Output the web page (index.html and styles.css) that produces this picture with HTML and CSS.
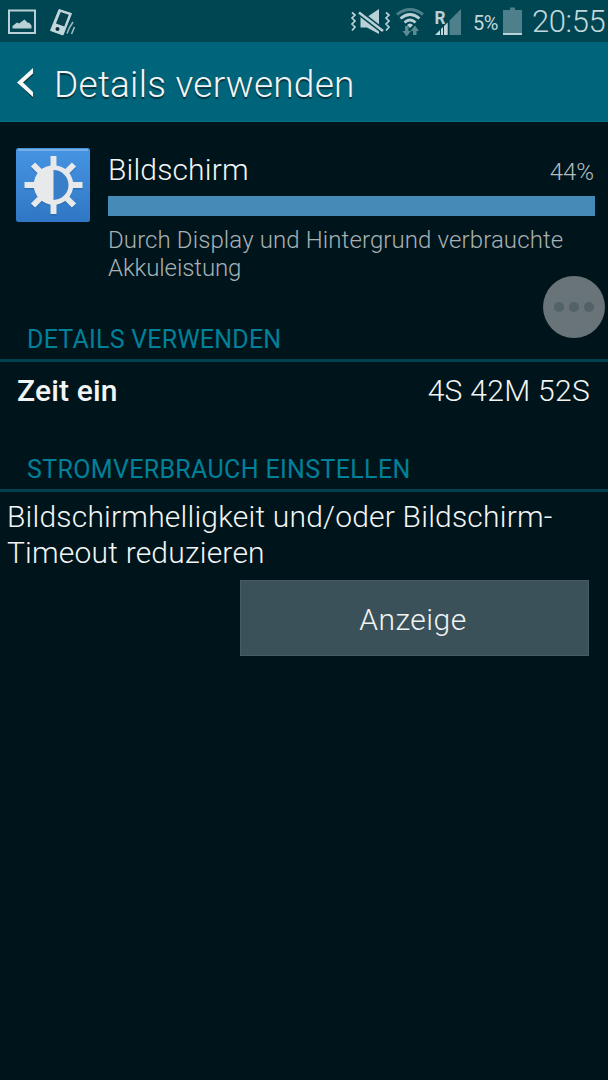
FILE: index.html
```html
<!DOCTYPE html>
<html lang="de">
<head>
<meta charset="utf-8">
<title>Details verwenden</title>
<link rel="stylesheet" href="styles.css">
</head>
<body>
<header class="status">
  <svg class="status-left" width="100" height="42" viewBox="0 0 100 42">
    <path d="M9 10.500H35V33H9Z" fill="none" stroke="#b9d0d6" stroke-width="2"/>
    <path d="M12.500 28.500V26L17 22.500L19 23.500L24.500 19.500L28 23L29 22.500L31.500 25.500V28.500Z" fill="#b9d0d6"/>
    <path d="M59 9.500L71.500 13.500L63 35L50.500 30.500Z" fill="#c2d7dc" stroke="#c2d7dc" stroke-width="1" stroke-linejoin="round"/>
    <path d="M60.600 12L68.800 14.700L64.300 26.500L56 23.500Z" fill="#0a4350"/>
    <circle cx="57.500" cy="29" r="2" fill="#082d36"/>
    <path d="M67 33.500L69.500 27.500L73 22M71.500 34L74.500 27" fill="none" stroke="#9bb9bf" stroke-width="1.600"/>
  </svg>
  <svg class="status-right" width="130" height="42" viewBox="340 0 130 42">
    <path d="M352 12.500L355 15L352 18L355 21L352 24L355 27L352 30.500M386 12.500L389 15L386 18L389 21L386 24L389 27L386 30.500" fill="none" stroke="#b9d0d6" stroke-width="1.700"/>
    <path d="M360.500 17H367L379 9V34L367 27.500H360.500Z" fill="#b9d0d6"/>
    <path d="M359 12.500L383 31" stroke="#004652" stroke-width="5.500"/>
    <path d="M359 12.500L383 31" stroke="#b9d0d6" stroke-width="2.600"/>
    <path d="M397 14.500Q410 4.500 423 14.500" fill="none" stroke="#4d808a" stroke-width="3"/>
    <path d="M400.500 18.500Q410 10.500 419.500 18.500M404.500 22.500Q410 17.500 415.500 22.500" fill="none" stroke="#b9d0d6" stroke-width="2.800"/>
    <path d="M407 25Q410 22 413 25L410 28Z" fill="#b9d0d6"/>
    <path d="M405 26H408.500V31H411L406.700 36.500L402.500 31H405ZM413 35V31H410.500L415 25.500L419 31H416.500V35Z" fill="#5c8b94"/>
    <path d="M461 9V35H449.500V20.500Z" fill="#4d808a"/>
    <path d="M435 35L440 30V35ZM441 35V29L443 27V35ZM444 35V26L447.700 22.500V35Z" fill="#c2d7dc"/>
    <text class="roaming" x="434.500" y="23.500" textLength="11" lengthAdjust="spacingAndGlyphs">R</text>
  </svg>
  <span class="charge">5%</span>
  <svg class="battery" width="20" height="42" viewBox="0 0 20 42">
    <path d="M0 10H7V7.500H12V10H19V34H0Z" fill="#4d808a"/>
    <path d="M0 33H19V35H0Z" fill="#b9d0d6"/>
  </svg>
  <time class="clock">20:55</time>
</header>
<nav class="titlebar">
  <svg class="back" width="20" height="36" viewBox="0 0 20 36">
    <path d="M18 4.500L3 18.500L18 33.500V27.500L8.500 18.500L18 10Z" fill="#082d36"/>
    <path d="M18 3L2 17.500L18 32V27L8 17.500L18 8.500Z" fill="#f5f7f7"/>
  </svg>
  <h1 class="title">Details verwenden</h1>
</nav>
<main>
  <section class="summary">
    <svg class="app-icon" width="74" height="74" viewBox="0 0 74 74">
      <defs><linearGradient id="blue" x2="0" y2="1"><stop stop-color="#4594e2"/><stop offset=".45" stop-color="#3d88d6"/><stop offset="1" stop-color="#2f76c4"/></linearGradient></defs>
      <rect width="74" height="74" rx="2.500" fill="url(#blue)"/>
      <path d="M2 2H72" stroke="#79aee5" stroke-width="2"/>
      <g class="sun-shadow" transform="translate(0 1.500)">
        <path d="M37.500 8V20M37.500 54V66M8.500 37H20M55 37H66.500M17 16.500L25 24.500M50 49.500L58 57.500M58 16.500L50 24.500M25 49.500L17 57.500"/>
        <circle cx="37.500" cy="37" r="16.500"/>
      </g>
      <path class="rays" d="M37.500 8V20M37.500 54V66M8.500 37H20M55 37H66.500M17 16.500L25 24.500M50 49.500L58 57.500M58 16.500L50 24.500M25 49.500L17 57.500"/>
      <circle cx="37.500" cy="37" r="19.800" fill="#e8e9ea"/>
      <path d="M37.500 22A15 15 0 0 1 37.500 52Z" fill="#397fc8"/>
    </svg>
    <div class="usage">
      <div class="usage-head"><span class="name">Bildschirm</span><span class="percent">44%</span></div>
      <div class="bar"></div>
      <p class="description"><span class="desc-one">Durch Display und Hintergrund verbrauchte</span><br><span class="desc-two">Akkuleistung</span></p>
    </div>
  </section>
  <h2 class="section"><span class="section-one">DETAILS VERWENDEN</span></h2>
  <div class="row"><strong class="label">Zeit ein</strong><span class="value">4S 42M 52S</span></div>
  <h2 class="section"><span class="section-two">STROMVERBRAUCH EINSTELLEN</span></h2>
  <p class="hint"><span class="hint-one">Bildschirmhelligkeit und/oder Bildschirm-</span><br><span class="hint-two">Timeout reduzieren</span></p>
  <div class="actions"><button class="button">Anzeige</button></div>
</main>
<div class="floating"><i></i><i></i><i></i></div>
</body>
</html>
```
FILE: styles.css
```css
* { box-sizing: border-box; }
body { margin: 0; width: 608px; height: 1080px; overflow: hidden; background: #00151b; color: #f3f5f5; font-family: Roboto, sans-serif; font-weight: 300; }
h1, h2, p { margin: 0; font-weight: inherit; }
span, h1, time { white-space: nowrap; }
.status { height: 42px; display: flex; background: #004652; color: #c2d7dc; }
.status-left { flex: none; margin-right: 240px; }
.status-right { flex: none; }
.roaming { font: 700 19px Roboto, sans-serif; fill: #b9d0d6; }
.charge { flex: none; width: 33px; padding-left: 3px; font-size: 20px; line-height: 46px; font-weight: 400; letter-spacing: -0.5px; }
.battery { flex: none; }
.clock { padding-left: 9px; font-size: 31px; line-height: 44px; letter-spacing: -0.4px; }
.titlebar { height: 80px; padding: 0 15px; display: flex; align-items: center; gap: 19px; background: #00647a; border-bottom: 1px solid #0b7184; }
.back { flex: none; margin-top: 3px; }
.title { font-size: 37px; line-height: 80px; padding-top: 6px; letter-spacing: 0.25px; text-shadow: 0 1.500px 1px #06323c; }
.summary { height: 193px; display: flex; gap: 18px; padding: 26px 13px 0 16px; }
.app-icon { flex: none; }
.sun-shadow, .rays { fill: none; stroke-width: 6; stroke-linecap: butt; }
.sun-shadow { stroke: #2460a3; opacity: .55; }
.rays { stroke: #e8e9ea; }
.usage { flex: 1; }
.usage-head { height: 48px; display: flex; justify-content: space-between; }
.name { font-size: 30px; line-height: 44px; letter-spacing: 0.15px; }
.percent { font-size: 24px; line-height: 49px; color: #b5bdbf; padding-right: 1px; }
.bar { height: 20px; background: #468ab7; }
.description { padding-top: 10px; font-size: 24px; line-height: 28px; letter-spacing: 0.11px; color: #a8b1b4; }
.desc-two { letter-spacing: -0.1px; }
.section { height: 47px; border-bottom: 3px solid #00414f; padding-left: 27px; font-size: 25px; line-height: 50px; font-weight: 400; color: #008099; }
.section-one { letter-spacing: 0.22px; }
.section-two { letter-spacing: 0.34px; }
.row { height: 83px; display: flex; justify-content: space-between; padding: 0 18px 0 17px; font-size: 30px; line-height: 57px; }
.label { font-weight: 500; letter-spacing: 0.15px; }
.value { letter-spacing: 0.3px; }
.hint { padding: 7px 7px 0; font-size: 30px; line-height: 35.500px; letter-spacing: 0.2px; }
.actions { display: flex; justify-content: flex-end; padding: 10px 19px 0 0; }
.button { width: 349px; height: 76px; padding: 2px 3px 0 0; background: #3b515a; border: 1px solid #465c65; color: #f0f3f3; font: 300 30px Roboto, sans-serif; letter-spacing: 0.5px; }
.floating { position: absolute; left: 543px; top: 276px; width: 62px; height: 62px; border-radius: 50%; background: #687477; display: flex; align-items: center; justify-content: center; gap: 5px; }
.floating i { width: 10px; height: 10px; border-radius: 50%; background: #526267; }
```
